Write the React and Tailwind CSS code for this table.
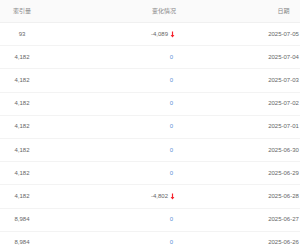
const rows = [
  { idx: "93", change: "-4,089", down: true, date: "2025-07-05" },
  { idx: "4,182", change: "0", date: "2025-07-04" },
  { idx: "4,182", change: "0", date: "2025-07-03" },
  { idx: "4,182", change: "0", date: "2025-07-02" },
  { idx: "4,182", change: "0", date: "2025-07-01" },
  { idx: "4,182", change: "0", date: "2025-06-30" },
  { idx: "4,182", change: "0", date: "2025-06-29" },
  { idx: "4,182", change: "-4,802", down: true, date: "2025-06-28" },
  { idx: "8,984", change: "0", date: "2025-06-27" },
  { idx: "8,984", change: "0", date: "2025-06-26" },
]

function DownArrow() {
  return (
    <svg width="5" height="7" viewBox="0 0 5 7" className="ml-[2px]">
      <path d="M2.5 0.5V5.5" stroke="#f5222d" strokeWidth="1.2" />
      <path d="M0.6 4L2.5 6.6L4.4 4Z" fill="#f5222d" />
    </svg>
  )
}

export default function App() {
  return (
    <div
      className="w-[300px] h-[250px] overflow-hidden bg-white text-[6px] text-[#666]"
      style={{ fontFamily: '"Liberation Sans", "Noto Sans CJK SC", sans-serif' }}
    >
      <div className="grid grid-cols-[44px_132px_124px] h-[23px] items-center bg-[#fafafa] border-b border-[#f0f0f0] text-[#888]">
        <div className="text-center">索引量</div>
        <div className="text-right">变化情况</div>
        <div className="flex justify-end pr-[1px]">
          <div className="w-[31px] text-center">日期</div>
        </div>
      </div>
      {rows.map((r, i) => (
        <div
          key={i}
          className="grid grid-cols-[44px_132px_124px] h-[23.2px] items-center border-b border-[#f3f3f3]"
        >
          <div className="text-center">{r.idx}</div>
          <div className="flex justify-end items-center pr-[1px]">
            {r.down ? (
              <>
                <span>{r.change}</span>
                <DownArrow />
              </>
            ) : (
              <span className="text-[#5b8fd6] pr-[2px]">{r.change}</span>
            )}
          </div>
          <div className="flex justify-end pr-[1px]">
            <div className="w-[31px] text-center">{r.date}</div>
          </div>
        </div>
      ))}
    </div>
  )
}
